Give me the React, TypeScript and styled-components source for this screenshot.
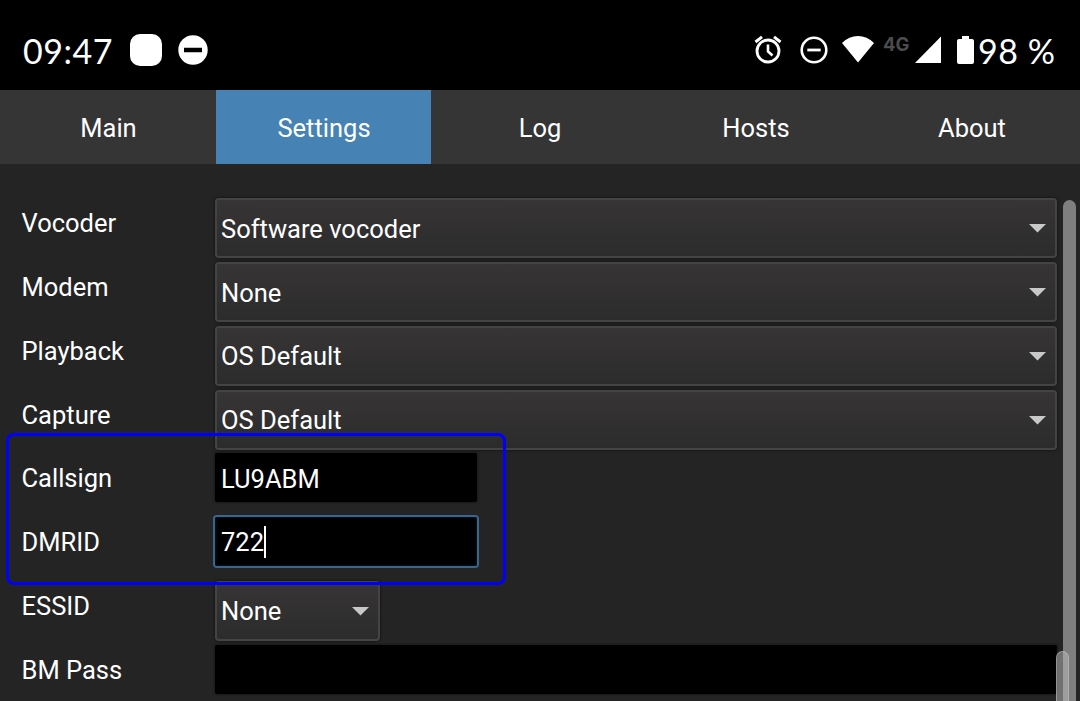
import React from "react";
import styled, { createGlobalStyle } from "styled-components";

const GlobalStyle = createGlobalStyle`
  * { box-sizing: border-box; }
  html, body { margin: 0; padding: 0; background: #242424; overflow: hidden; }
`;

const Screen = styled.div`
  position: relative;
  width: 1080px;
  height: 701px;
  overflow: hidden;
  display: flex;
  flex-direction: column;
  background: #242424;
  color: #fff;
  font-family: Roboto, "Liberation Sans", sans-serif;
  font-size: 25.5px;
`;

const StatusBar = styled.header`
  flex: none;
  height: 90px;
  padding: 12px 24px 0 23px;
  display: flex;
  align-items: center;
  justify-content: space-between;
  background: #000;
  font-family: Lato, "Noto Sans", sans-serif;
  font-size: 34px;
  line-height: 1;
  letter-spacing: 0.5px;
`;

const StatusGroup = styled.div`
  display: flex;
  align-items: center;
  height: 44px;
`;

const Clock = styled.span`
  width: 107px;
  white-space: nowrap;
`;

const AppBadge = styled.span`
  width: 32px;
  height: 32px;
  border-radius: 10px;
  margin-top: -2px;
  margin-right: 16px;
  background: #fff;
`;

const StatusIcon = styled.svg<{ $gap?: number }>`
  display: block;
  flex: none;
  margin-top: -2px;
  margin-right: ${(p) => p.$gap ?? 0}px;
`;

const Network = styled.span`
  width: 32px;
  height: 33px;
  color: #4c4c4c;
  font: 700 18.5px/1 Inter, sans-serif;
  letter-spacing: 0;
  white-space: nowrap;
`;

const Battery = styled.span`
  width: 78px;
  white-space: nowrap;
`;

const Tabs = styled.nav`
  flex: none;
  height: 74px;
  display: grid;
  grid-template-columns: 216px 215px 217px 215px 217px;
  background: #353535;
`;

const Tab = styled.div<{ $active?: boolean }>`
  display: flex;
  align-items: center;
  justify-content: center;
  padding: 2px 0 0 1px;
  background: ${(p) => (p.$active ? "#4682b4" : "transparent")};
`;

const Body = styled.main`
  flex: 1;
  min-height: 0;
  display: flex;
  align-items: flex-start;
  padding-top: 34.3px;
`;

const Form = styled.div`
  width: 1063px;
  display: flex;
  flex-direction: column;
`;

const Row = styled.div`
  height: 63.75px;
  display: grid;
  grid-template-columns: 193px auto;
  justify-content: start;
  align-items: start;
  padding-left: 21.5px;
`;

const Label = styled.label`
  height: 50px;
  line-height: 51.4px;
`;

const Combo = styled.div<{ $width: number }>`
  width: ${(p) => p.$width}px;
  height: 60px;
  padding: 1px 9px 0 4.5px;
  display: flex;
  align-items: center;
  justify-content: space-between;
  border: 2px solid #444444;
  border-radius: 4px;
  background: linear-gradient(#373435, #2c2c2c);
  box-shadow: 0 0 2px 1px #191919;
`;

const Field = styled.div<{ $width: number; $focused?: boolean }>`
  width: ${(p) => p.$width}px;
  height: 49px;
  padding: 1.6px 6.5px 0;
  display: flex;
  align-items: center;
  border-radius: 2px;
  background: #000;
  box-shadow: ${(p) =>
    p.$focused ? "inset 0 0 2px 1px #0b141c, 0 0 0 2px #376691" : "0 0 2px 1px #1a1a1a"};
`;

const Caret = styled.span`
  width: 2px;
  height: 32px;
  margin-left: -0.5px;
  background: #fff;
`;

const ScrollTrack = styled.div`
  width: 13px;
  height: 520px;
  margin-top: 2px;
  border-radius: 7px;
  background: #7f7f7f;
`;

const ScrollThumb = styled.div`
  position: absolute;
  left: 1056px;
  top: 651px;
  width: 13px;
  height: 70px;
  border: 1px solid rgba(190, 190, 190, 0.55);
  border-radius: 7px;
  background: rgba(190, 190, 190, 0.5);
`;

const Highlight = styled.div`
  position: absolute;
  left: 6px;
  top: 433px;
  width: 500px;
  height: 152px;
  border: 3px solid #0000ff;
  border-radius: 8px;
`;

const Arrow = () => (
  <svg width="17" height="9" viewBox="0 0 17 9">
    <path d="M0 0H17L8.5 8.5Z" fill="#c8c8c8" />
  </svg>
);

const Select = ({ value, width = 842 }: { value: string; width?: number }) => (
  <Combo $width={width}>
    <span>{value}</span>
    <Arrow />
  </Combo>
);

export default function App() {
  return (
    <>
      <GlobalStyle />
      <Screen>
        <StatusBar>
          <StatusGroup>
            <Clock>09:47</Clock>
            <AppBadge />
            <StatusIcon width="30" height="30" viewBox="0 0 30 30">
              <circle cx="15" cy="15" r="14.7" fill="#fff" />
              <path d="M6 15H24" stroke="#000" strokeWidth="4.5" />
            </StatusIcon>
          </StatusGroup>
          <StatusGroup>
            <StatusIcon $gap={18} width="28" height="30" viewBox="0 0 28 30" fill="none" stroke="#fff">
              <circle cx="14" cy="16" r="11" strokeWidth="2.8" />
              <path d="M14 9.5V16.5L18.5 20.5" strokeWidth="2.6" />
              <path d="M1.5 7L8 1.8M20 1.8L26.5 7" strokeWidth="3" />
            </StatusIcon>
            <StatusIcon $gap={14} width="28" height="30" viewBox="0 0 28 30" fill="none" stroke="#fff">
              <circle cx="14" cy="15" r="12.3" strokeWidth="2.6" />
              <path d="M7.3 15H20.7" strokeWidth="2.8" />
            </StatusIcon>
            <StatusIcon $gap={9} width="32" height="30" viewBox="0 0 32 30">
              <path d="M0 8Q7 1 16 1T32 8L16 27.5Z" fill="#fff" />
            </StatusIcon>
            <Network>4G</Network>
            <StatusIcon $gap={16} width="26" height="30" viewBox="0 0 26 30">
              <path d="M26 1.5V28H0Z" fill="#fff" />
            </StatusIcon>
            <StatusIcon $gap={4} width="17" height="30" viewBox="0 0 17 30">
              <path d="M5 1H12V4H15Q17 4 17 6V27Q17 29 15 29H2Q0 29 0 27V6Q0 4 2 4H5Z" fill="#fff" />
            </StatusIcon>
            <Battery>98 %</Battery>
          </StatusGroup>
        </StatusBar>
        <Tabs>
          <Tab>Main</Tab>
          <Tab $active>Settings</Tab>
          <Tab>Log</Tab>
          <Tab>Hosts</Tab>
          <Tab>About</Tab>
        </Tabs>
        <Body>
          <Form>
            <Row>
              <Label>Vocoder</Label>
              <Select value="Software vocoder" />
            </Row>
            <Row>
              <Label>Modem</Label>
              <Select value="None" />
            </Row>
            <Row>
              <Label>Playback</Label>
              <Select value="OS Default" />
            </Row>
            <Row>
              <Label>Capture</Label>
              <Select value="OS Default" />
            </Row>
            <Row>
              <Label>Callsign</Label>
              <Field $width={262}>LU9ABM</Field>
            </Row>
            <Row>
              <Label>DMRID</Label>
              <Field $width={262} $focused>
                722
                <Caret />
              </Field>
            </Row>
            <Row>
              <Label>ESSID</Label>
              <Select value="None" width={165.4} />
            </Row>
            <Row>
              <Label>BM Pass</Label>
              <Field $width={842} />
            </Row>
          </Form>
          <ScrollTrack />
        </Body>
        <ScrollThumb />
        <Highlight />
      </Screen>
    </>
  );
}
